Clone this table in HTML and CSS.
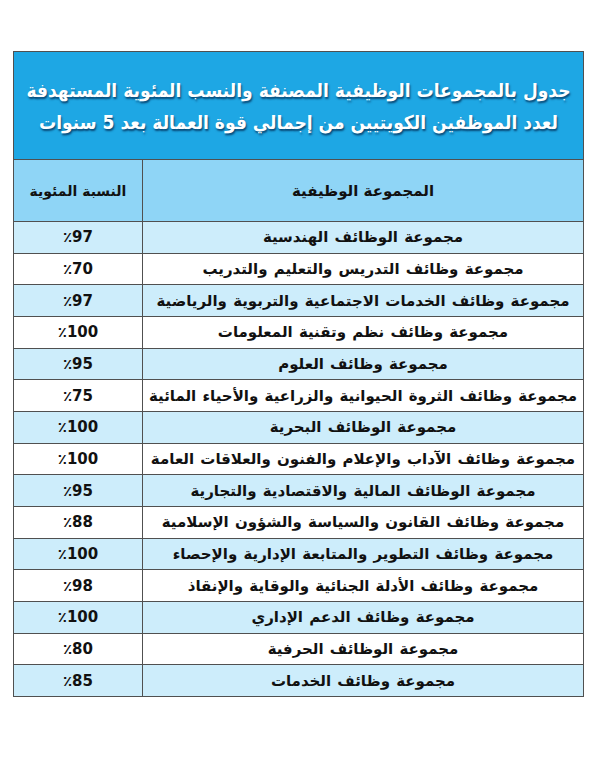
FILE: index.html
```html
<!DOCTYPE html>
<html lang="ar" dir="rtl">
<head>
<meta charset="utf-8">
<link rel="stylesheet" href="styles.css">
</head>
<body>
<table class="grid">
<colgroup><col class="col-name"><col class="col-pct"></colgroup>
<thead>
<tr class="title-row"><th colspan="2" class="title"><div class="tline">جدول بالمجموعات الوظيفية المصنفة والنسب المئوية المستهدفة</div><div class="tline">لعدد الموظفين الكويتيين من إجمالي قوة العمالة بعد 5 سنوات</div></th></tr>
<tr class="head-row"><th>المجموعة الوظيفية</th><th class="head-pct">النسبة المئوية</th></tr>
</thead>
<tbody>
<tr><td class="name">مجموعة الوظائف الهندسية</td><td class="pct">٪97</td></tr>
<tr><td class="name">مجموعة وظائف التدريس والتعليم والتدريب</td><td class="pct">٪70</td></tr>
<tr><td class="name">مجموعة وظائف الخدمات الاجتماعية والتربوية والرياضية</td><td class="pct">٪97</td></tr>
<tr><td class="name">مجموعة وظائف نظم وتقنية المعلومات</td><td class="pct">٪100</td></tr>
<tr><td class="name">مجموعة وظائف العلوم</td><td class="pct">٪95</td></tr>
<tr><td class="name">مجموعة وظائف الثروة الحيوانية والزراعية والأحياء المائية</td><td class="pct">٪75</td></tr>
<tr><td class="name">مجموعة الوظائف البحرية</td><td class="pct">٪100</td></tr>
<tr><td class="name">مجموعة وظائف الآداب والإعلام والفنون والعلاقات العامة</td><td class="pct">٪100</td></tr>
<tr><td class="name">مجموعة الوظائف المالية والاقتصادية والتجارية</td><td class="pct">٪95</td></tr>
<tr><td class="name">مجموعة وظائف القانون والسياسة والشؤون الإسلامية</td><td class="pct">٪88</td></tr>
<tr><td class="name">مجموعة وظائف التطوير والمتابعة الإدارية والإحصاء</td><td class="pct">٪100</td></tr>
<tr><td class="name">مجموعة وظائف الأدلة الجنائية والوقاية والإنقاذ</td><td class="pct">٪98</td></tr>
<tr><td class="name">مجموعة وظائف الدعم الإداري</td><td class="pct">٪100</td></tr>
<tr><td class="name">مجموعة الوظائف الحرفية</td><td class="pct">٪80</td></tr>
<tr><td class="name">مجموعة وظائف الخدمات</td><td class="pct">٪85</td></tr>
</tbody>
</table>
</body>
</html>
```
FILE: styles.css
```css
html, body {
  margin: 0;
  padding: 0;
  background: #ffffff;
}
body {
  padding-top: 51px;
  font-family: "DejaVu Sans", sans-serif;
}
.grid {
  margin-right: 16px;
  width: 570px;
  border-collapse: collapse;
  table-layout: fixed;
  direction: rtl;
}
.col-name { width: 441px; }
.col-pct { width: 129px; }
.grid th, .grid td {
  border: 1.5px solid #505050;
  padding: 0;
  text-align: center;
  vertical-align: middle;
  overflow: hidden;
}
.title-row { height: 108px; }
.title {
  background: #1ea7e4;
  color: #ffffff;
  font-family: "DejaVu Sans", sans-serif;
  font-stretch: condensed;
  font-size: 19px;
  font-weight: bold;
  line-height: 32px;
  text-shadow: 1px 2px 2px rgba(0, 40, 80, 0.75);
  padding-bottom: 4px;
}
.tline { white-space: nowrap; }
.head-row { height: 62px; }
.head-row th {
  background: #8fd5f6;
  color: #111111;
  font-size: 15px;
  font-weight: bold;
}
.head-row .head-pct { font-size: 14px; }
tbody tr { height: 31.67px; }
tbody tr:nth-child(odd) td { background: #cdedfb; }
tbody tr:nth-child(even) td { background: #ffffff; }
.name {
  font-size: 15px;
  font-weight: bold;
  color: #111111;
  white-space: nowrap;
  word-spacing: 1px;
}
.pct {
  font-size: 15px;
  font-weight: bold;
  color: #111111;
}
```
